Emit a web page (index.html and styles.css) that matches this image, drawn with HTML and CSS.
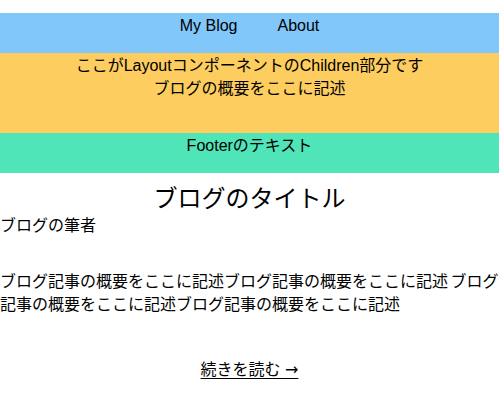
FILE: index.html
```html
<!DOCTYPE html>
<html lang="ja">
<head>
<meta charset="utf-8">
<title>My Blog</title>
<link rel="stylesheet" href="styles.css">
</head>
<body>
<div class="site">
  <header class="nav">
    <a class="nav-link" href="#">My Blog</a>
    <a class="nav-link" href="#">About</a>
  </header>
  <main class="children">
    <p class="children-line">ここがLayoutコンポーネントのChildren部分です</p>
    <p class="children-line">ブログの概要をここに記述</p>
  </main>
  <footer class="footer">Footerのテキスト</footer>
</div>
<article class="post">
  <h2 class="post-title">ブログのタイトル</h2>
  <p class="post-author">ブログの筆者</p>
  <p class="post-summary">ブログ記事の概要をここに記述ブログ記事の概要をここに記述 ブログ記事の概要をここに記述ブログ記事の概要をここに記述</p>
  <div class="post-more"><a class="more-link" href="#">続きを読む <span class="arrow">→</span></a></div>
</article>
</body>
</html>
```
FILE: styles.css
```css
html, body {
  margin: 0;
  padding: 0;
  background: #fff;
}
body {
  font-family: "Liberation Sans", "Noto Sans CJK JP", sans-serif;
  font-size: 16px;
  line-height: 23px;
  color: #000;
}
.site {
  padding-top: 13.3px;
}
.nav {
  display: flex;
  justify-content: center;
  align-items: flex-start;
  height: 40px;
  box-sizing: border-box;
  padding-top: 1px;
  background: #81c7fa;
}
.nav-link {
  color: #000;
  text-decoration: none;
  padding: 0 20px;
}
.children {
  display: block;
  height: 80px;
  box-sizing: border-box;
  padding-top: 1px;
  background: #fecd5f;
  text-align: center;
}
.children-line {
  margin: 0;
}
.footer {
  height: 40px;
  box-sizing: border-box;
  padding-top: 1px;
  background: #50e5b9;
  text-align: center;
}
.post {
  padding-top: 11.7px;
}
.post-title {
  margin: 0;
  font-size: 24px;
  font-weight: normal;
  line-height: 28px;
  text-align: center;
}
.post-author {
  margin: 1px 0 0;
}
.post-summary {
  margin: 33px 0 0;
  word-spacing: -2px;
}
.post-more {
  margin-top: 42px;
  text-align: center;
}
.more-link {
  color: #000;
  text-decoration: underline;
  text-underline-offset: 3px;
}
.arrow {
  font-family: "DejaVu Sans", sans-serif;
}
```
